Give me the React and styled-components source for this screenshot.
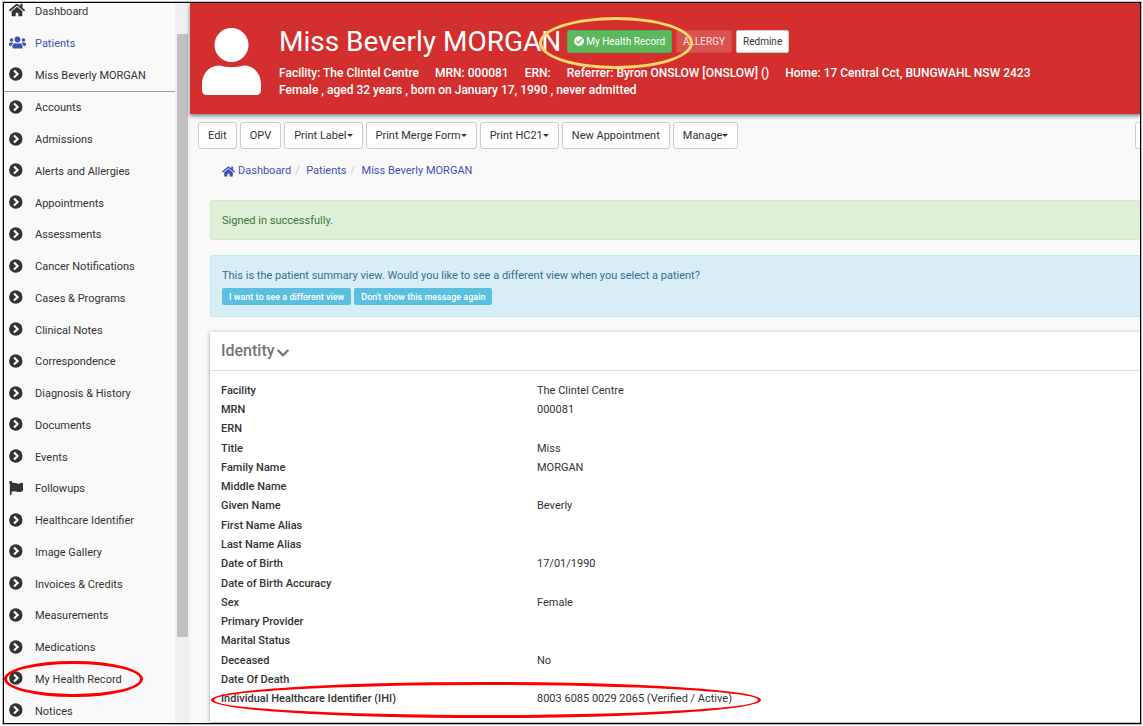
import React from 'react';
import styled, { createGlobalStyle } from 'styled-components';
import {
  FaHome,
  FaUsers,
  FaChevronDown,
  FaFlag,
  FaCheckCircle,
} from 'react-icons/fa';

const GlobalStyle = createGlobalStyle`
  * {
    box-sizing: border-box;
  }
  body {
    margin: 0;
    background: #fff;
    color: #333;
    font-family: Roboto, "Liberation Sans", sans-serif;
    font-size: 11px;
    line-height: 16px;
  }
  a {
    color: inherit;
    text-decoration: none;
  }
  button {
    font-family: inherit;
    cursor: pointer;
  }
`

const Page = styled.div`
  height: 100vh;
  padding: 2px 2px 2px 3px;
`

const Frame = styled.div`
  display: flex;
  height: 100%;
  border: 1px solid #000;
  outline: 1px solid #bbb;
  overflow: hidden;
  background: #f9f9f9;
`

/* sidebar */

const Sidebar = styled.nav`
  display: flex;
  flex: none;
  width: 186px;
  background: #f9f9f9;
`

const Menu = styled.div`
  display: flex;
  flex-direction: column;
  flex: 1;
  margin: -8px 0 -4px;
`

const MenuList = styled.ul`
  display: grid;
  grid-auto-rows: ${props => props.$fill ? '1fr' : '32px'};
  flex: ${props => props.$fill ? '1' : 'none'};
  margin: 0;
  padding: 0;
  list-style: none;
  border-bottom: ${props => props.$fill ? 'none' : '1px solid #999'};
`

const MenuItem = styled.li`
  position: relative;
  display: flex;
`

const MenuLink = styled.a`
  display: flex;
  align-items: center;
  flex: 1;
  padding: 1px 0 0 5px;
  color: ${props => props.$active ? '#3f51b5' : '#333'};
`

const MenuIcon = styled.span`
  display: flex;
  width: 26px;
  padding-bottom: 3px;
  font-size: ${props => props.$size || '14px'};
`

const ScrollTrack = styled.div`
  width: 15px;
  padding: 31px 2px 0;
  background: #f0f0f0;
`

const ScrollThumb = styled.div`
  height: 603px;
  background: #c1c1c1;
`

/* hand drawn marker around something important */
const Ring = styled.span`
  position: absolute;
  z-index: 2;
  border: 3px solid ${props => props.$color};
  border-radius: 50%;
  inset: ${props => props.$inset};
  pointer-events: none;
`

/* main column */

const Main = styled.main`
  display: flex;
  flex-direction: column;
  flex: 1;
  min-width: 0;
`

const PatientHeader = styled.header`
  display: flex;
  align-items: flex-start;
  gap: 18px;
  flex: none;
  height: 111px;
  padding: 23px 12px 0;
  background: #d32f2f;
  color: #fff;
  box-shadow: 0 2px 4px rgba(0, 0, 0, 0.5);
`

const Avatar = styled.svg`
  flex: none;
  width: 59px;
  height: 70px;
`

const TitleRow = styled.div`
  display: flex;
  align-items: center;
  gap: 4px;
  height: 30px;
  margin-bottom: 9px;
`

const PatientName = styled.h1`
  margin: 0;
  padding: 2px 2px 0 0;
  font-size: 28px;
  font-weight: 400;
  line-height: 30px;
  white-space: nowrap;
`

const Marked = styled.span`
  position: relative;
  display: flex;
`

const HeaderBtn = styled.button`
  display: flex;
  align-items: center;
  gap: 2px;
  height: 23px;
  padding: 0 6px;
  border: 1px solid ${props => props.$border};
  border-radius: 2px;
  background: ${props => props.$bg};
  color: ${props => props.$color || '#fff'};
  font-size: 10px;
  white-space: nowrap;
`

const Details = styled.div`
  display: flex;
  gap: 16px;
  font-size: 12px;
  font-weight: 500;
  line-height: 17px;
  white-space: nowrap;
`

const Toolbar = styled.div`
  display: flex;
  gap: 3px;
  padding: 8px 0 0 8px;
`

const ToolBtn = styled.button`
  display: flex;
  align-items: center;
  flex: none;
  height: 27px;
  padding: 0 9px;
  border: 1px solid #ccc;
  border-radius: 3px;
  background: #fff;
  color: #333;
  font-size: 11px;
  white-space: nowrap;
  &:last-child {
    margin: 0 -15px 0 auto;
  }
`

const Caret = styled.span`
  border: 3px solid transparent;
  border-top-color: #333;
  border-bottom: 0;
`

const Crumbs = styled.nav`
  display: flex;
  align-items: center;
  gap: 4px;
  padding: 14px 32px 21px;
  color: #3f51b5;
  a {
    display: flex;
    align-items: center;
    gap: 3px;
  }
  span {
    width: 7px;
    color: #ccc;
  }
`

const Alert = styled.div`
  margin: 0 0 15px 20px;
  padding: 12px 11px 10px;
  border: 1px solid ${props => props.$border};
  border-right: 0;
  border-radius: 3px 0 0 3px;
  background: ${props => props.$bg};
  color: ${props => props.$color};
  p {
    margin: 0;
  }
`

const AlertActions = styled.div`
  display: flex;
  gap: 3px;
  margin: 4px 0 1px;
`

const InfoBtn = styled.button`
  height: 17px;
  padding: 0 7px;
  border: 0;
  border-radius: 2px;
  background: #5bc0de;
  color: #fff;
  font-size: 9px;
  font-weight: 500;
  white-space: nowrap;
`

const Card = styled.section`
  display: flex;
  flex-direction: column;
  flex: 1;
  margin: 0 0 1px 20px;
  background: #fff;
  box-shadow: 0 1px 4px rgba(0, 0, 0, 0.4);
`

const CardTitle = styled.h2`
  display: flex;
  align-items: center;
  gap: 1px;
  height: 39px;
  margin: 0;
  padding: 0 11px;
  border-bottom: 1px solid #ddd;
  color: #757575;
  font-size: 16px;
  font-weight: 500;
  svg {
    margin-top: 4px;
  }
`

const Fields = styled.dl`
  display: grid;
  grid-auto-rows: 1fr;
  flex: 1;
  margin: 0;
  padding: 10px 11px 13px;
`

const Field = styled.div`
  position: relative;
  display: grid;
  grid-template-columns: 316px 1fr;
  align-items: center;
  dt {
    font-weight: 500;
  }
  dd {
    margin: 0;
  }
`

const FieldMark = styled(Ring)`
  width: 550px;
`

const topMenu = [
  { label: 'Dashboard', icon: FaHome, size: '16px' },
  { label: 'Patients', icon: FaUsers, size: '17px', active: true },
  { label: 'Miss Beverly MORGAN' },
]

const menu = [
  { label: 'Accounts' },
  { label: 'Admissions' },
  { label: 'Alerts and Allergies' },
  { label: 'Appointments' },
  { label: 'Assessments' },
  { label: 'Cancer Notifications' },
  { label: 'Cases & Programs' },
  { label: 'Clinical Notes' },
  { label: 'Correspondence' },
  { label: 'Diagnosis & History' },
  { label: 'Documents' },
  { label: 'Events' },
  { label: 'Followups', icon: FaFlag },
  { label: 'Healthcare Identifier' },
  { label: 'Image Gallery' },
  { label: 'Invoices & Credits' },
  { label: 'Measurements' },
  { label: 'Medications' },
  { label: 'My Health Record', marked: true },
  { label: 'Notices' },
]

const tools = [
  { label: 'Edit' },
  { label: 'OPV' },
  { label: 'Print Label', caret: true },
  { label: 'Print Merge Form', caret: true },
  { label: 'Print HC21', caret: true },
  { label: 'New Appointment' },
  { label: 'Manage', caret: true },
]

const fields = [
  ['Facility', 'The Clintel Centre'],
  ['MRN', '000081'],
  ['ERN', ''],
  ['Title', 'Miss'],
  ['Family Name', 'MORGAN'],
  ['Middle Name', ''],
  ['Given Name', 'Beverly'],
  ['First Name Alias', ''],
  ['Last Name Alias', ''],
  ['Date of Birth', '17/01/1990'],
  ['Date of Birth Accuracy', ''],
  ['Sex', 'Female'],
  ['Primary Provider', ''],
  ['Marital Status', ''],
  ['Deceased', 'No'],
  ['Date Of Death', ''],
  ['Individual Healthcare Identifier (IHI)', '8003 6085 0029 2065 (Verified / Active)'],
]

function CircleChevron() {
  return (
    <svg width="1em" height="1em" viewBox="0 0 14 14">
      <circle cx="6.800" cy="7" r="6.700" fill="currentColor" />
      <path d="M5 3.500L8.600 7L5 10.500" fill="none" stroke="#f9f9f9" strokeWidth="2.200" />
    </svg>
  )
}

function MenuRow({ item }) {
  const Icon = item.icon || CircleChevron;
  return (
    <MenuItem>
      <MenuLink href="#" $active={item.active}>
        <MenuIcon $size={item.size}><Icon /></MenuIcon>
        {item.label}
      </MenuLink>
      {item.marked && <Ring $color="#f00" $inset="-3px 32px -2px 0" />}
    </MenuItem>
  )
}

function App() {
  return (
    <>
      <GlobalStyle />
      <Page>
        <Frame>
          <Sidebar>
            <Menu>
              <MenuList>
                {topMenu.map(item => <MenuRow key={item.label} item={item} />)}
              </MenuList>
              <MenuList $fill>
                {menu.map(item => <MenuRow key={item.label} item={item} />)}
              </MenuList>
            </Menu>
            <ScrollTrack>
              <ScrollThumb />
            </ScrollTrack>
          </Sidebar>

          <Main>
            <PatientHeader>
              <Avatar viewBox="0 0 59 70" fill="#fff">
                <circle cx="29.500" cy="19" r="17" />
                <path d="M17 39.500Q29.500 43 42 39.500C52 39.500 59 48 59 58V64Q59 69 54 69H5Q0 69 0 64V58C0 48 7 39.500 17 39.500Z" />
              </Avatar>
              <div>
                <TitleRow>
                  <PatientName>Miss Beverly MORGAN</PatientName>
                  <Marked>
                    <HeaderBtn $bg="#5cb85c" $border="#4cae4c">
                      <FaCheckCircle />My Health Record
                    </HeaderBtn>
                    <Ring $color="#ffd966" $inset="-13px -21px -16px -28px" />
                  </Marked>
                  <HeaderBtn $bg="#d9534f" $border="#d64742" $color="#fbe5e4">ALLERGY</HeaderBtn>
                  <HeaderBtn $bg="#fff" $border="#ccc" $color="#333">Redmine</HeaderBtn>
                </TitleRow>
                <Details>
                  <span>Facility: The Clintel Centre</span>
                  <span>MRN: 000081</span>
                  <span>ERN: </span>
                  <span>Referrer: Byron ONSLOW [ONSLOW] ()</span>
                  <span>Home: 17 Central Cct, BUNGWAHL NSW 2423</span>
                </Details>
                <Details>Female , aged 32 years , born on January 17, 1990 , never admitted</Details>
              </div>
            </PatientHeader>

            <Toolbar>
              {tools.map(tool => (
                <ToolBtn key={tool.label}>
                  {tool.label}
                  {tool.caret && <Caret />}
                </ToolBtn>
              ))}
              <ToolBtn aria-label="More" />
            </Toolbar>

            <Crumbs>
              <a href="#"><FaHome size={13} />Dashboard</a>
              <span>/</span>
              <a href="#">Patients</a>
              <span>/</span>
              <a href="#">Miss Beverly MORGAN</a>
            </Crumbs>

            <Alert $bg="#dff0d8" $border="#d6e9c6" $color="#3c763d">
              <p>Signed in successfully.</p>
            </Alert>
            <Alert $bg="#d9edf7" $border="#bce8f1" $color="#31708f">
              <p>This is the patient summary view. Would you like to see a different view when you select a patient?</p>
              <AlertActions>
                <InfoBtn>I want to see a different view</InfoBtn>
                <InfoBtn>Don't show this message again</InfoBtn>
              </AlertActions>
            </Alert>

            <Card>
              <CardTitle>Identity<FaChevronDown size={14} /></CardTitle>
              <Fields>
                {fields.map(([label, value], i) => (
                  <Field key={label}>
                    <dt>{label}</dt>
                    <dd>{value}</dd>
                    {i === fields.length - 1 && <FieldMark $color="#f00" $inset="-8px auto -9px -10px" />}
                  </Field>
                ))}
              </Fields>
            </Card>
          </Main>
        </Frame>
      </Page>
    </>
  )
}

export default App;
